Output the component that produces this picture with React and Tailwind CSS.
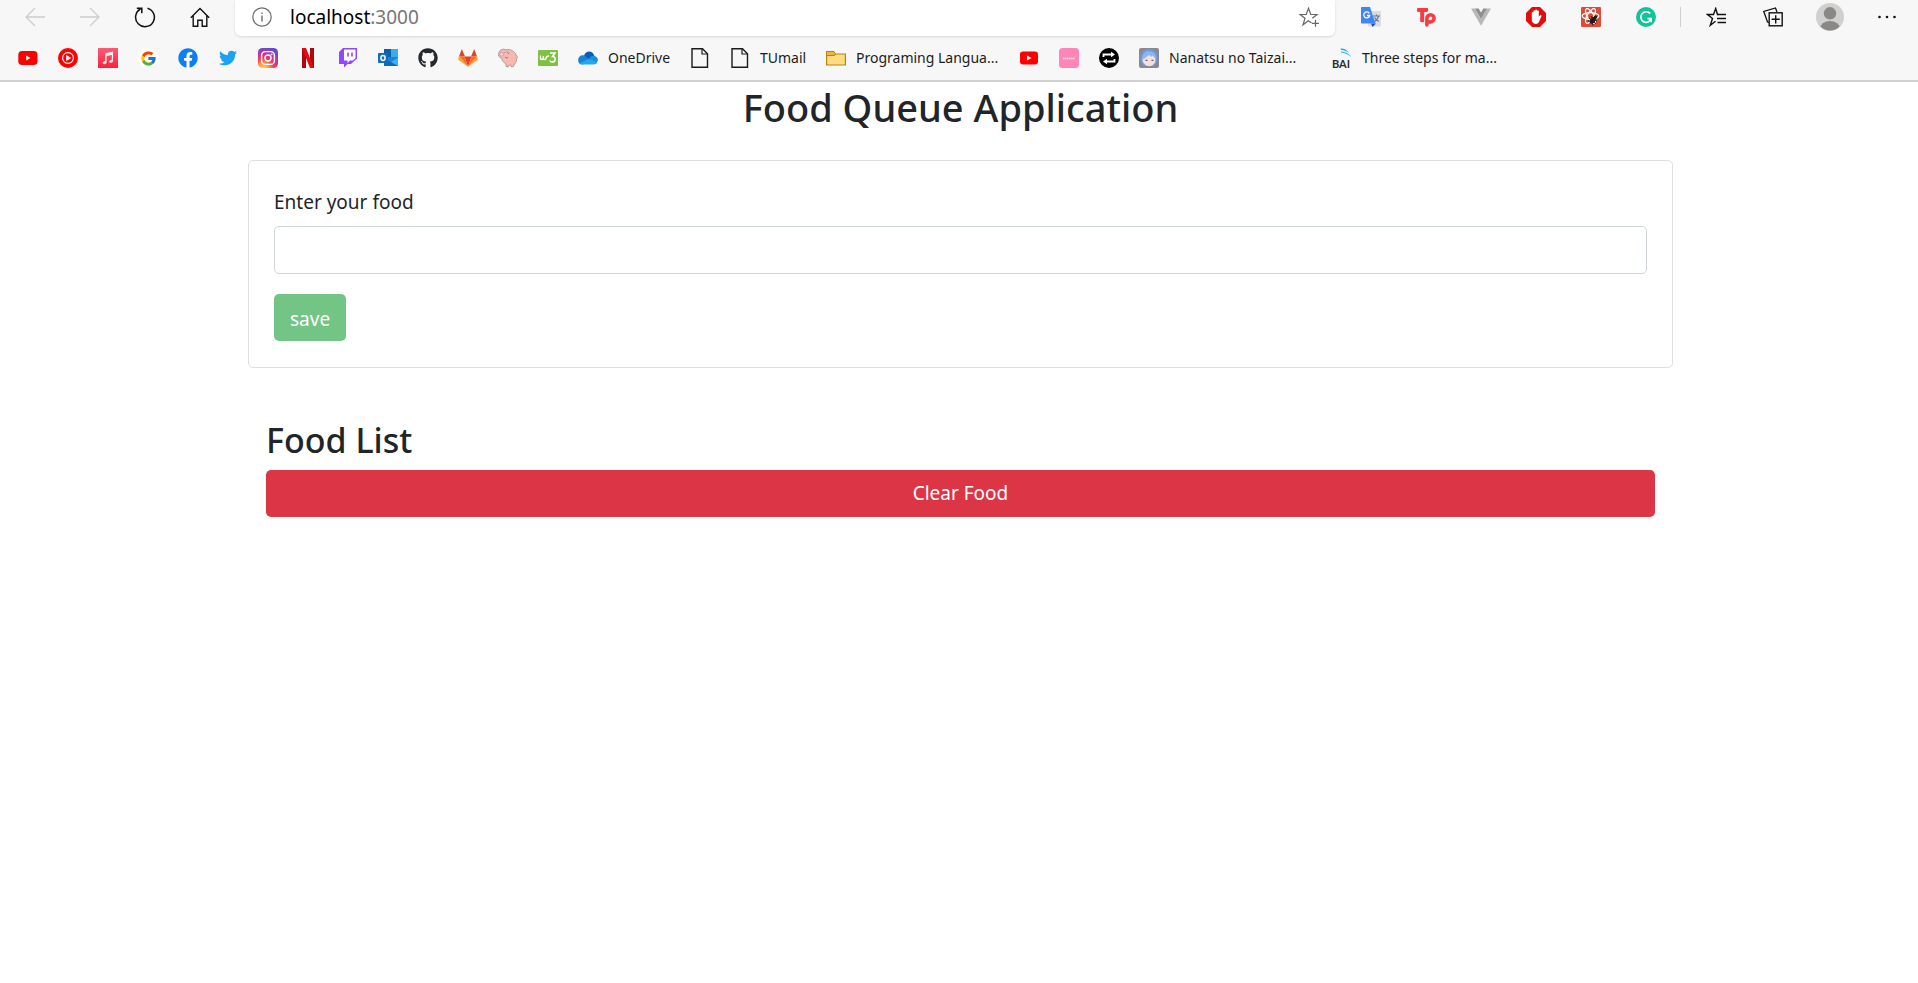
import React, { useState } from "react";
import { FaFacebook, FaTwitter, FaGithub } from "react-icons/fa";
import { FcGoogle } from "react-icons/fc";

function Svg({ size = 20, box = 20, children, className = "" }) {
  return (
    <svg width={size} height={size} viewBox={`0 0 ${box} ${box}`} fill="none" className={`shrink-0 ${className}`} aria-hidden="true">
      {children}
    </svg>
  );
}

const YoutubeIcon = () => (
  <Svg>
    <rect x="0.3" y="3" width="19.2" height="14" rx="3.8" fill="#ff0000" />
    <path d="M8.2 7.6v4.8l4.2-2.4z" fill="#fff" />
  </Svg>
);
const YoutubeMusicIcon = () => (
  <Svg>
    <circle cx="10" cy="10" r="10" fill="#ff0000" />
    <circle cx="10" cy="10" r="5.4" stroke="#fff" strokeWidth="1.1" />
    <path d="M8.2 7v6l5-3z" fill="#fff" />
  </Svg>
);
const AppleMusicIcon = () => (
  <Svg>
    <defs>
      <linearGradient id="music" x1="0" y1="0" x2="0" y2="1">
        <stop offset="0" stopColor="#fb5c74" />
        <stop offset="1" stopColor="#fa233b" />
      </linearGradient>
    </defs>
    <rect width="20" height="20" fill="url(#music)" />
    <path d="M7.2 5.3 15 3.6v8.9c0 1.4-.8 2.2-2.2 2.3-1.9.2-2.3-2-.6-2.6l1.6-.5V7l-5.2 1.1v5.7c0 1.5-.8 2.3-2.2 2.4-2 .1-2.3-2.1-.6-2.7l1.4-.4z" fill="#fff" fillOpacity=".92" />
  </Svg>
);
const GoogleIcon = () => (
  <span className="flex size-5 shrink-0 items-center justify-center rounded-full bg-white">
    <FcGoogle size={17} />
  </span>
);
const FacebookIcon = () => (
  <span className="flex size-5 shrink-0 items-center justify-center rounded-full bg-white">
    <FaFacebook size={20} color="#0c7ff2" />
  </span>
);
const TwitterIcon = () => <FaTwitter size={18} color="#1da1f2" />;
const InstagramIcon = () => (
  <Svg>
    <defs>
      <radialGradient id="insta" cx="0.27" cy="1.05" r="1.1">
        <stop offset="0" stopColor="#ffdc5e" />
        <stop offset="0.25" stopColor="#ff9d3c" />
        <stop offset="0.5" stopColor="#f2385b" />
        <stop offset="0.75" stopColor="#b932a8" />
        <stop offset="1" stopColor="#5a4fd0" />
      </radialGradient>
    </defs>
    <rect width="20" height="20" rx="4.5" fill="url(#insta)" />
    <rect x="3.6" y="3.6" width="12.8" height="12.8" rx="3.6" stroke="#fff" strokeWidth="1.4" />
    <circle cx="10" cy="10" r="3" stroke="#fff" strokeWidth="1.4" />
    <circle cx="13.7" cy="6.3" r="0.9" fill="#fff" />
  </Svg>
);
const NetflixIcon = () => (
  <Svg>
    <path d="M4 0h4v20H4zM12 0h4v20h-4z" fill="#b1060f" />
    <path d="M4 0h4l8 20h-4z" fill="#e50914" />
  </Svg>
);
const TwitchIcon = () => (
  <Svg>
    <path d="M1 4 5 0h14v10.5L13 16h-3.500L6 19.5V16H1z" fill="#9146ff" />
    <path d="M6 1.5h11.5V10L15 12.5h-3L9.500 15v-2.500H6z" fill="#fff" />
    <path d="M10 4.5v4M14 4.5v4" stroke="#9146ff" strokeWidth="1.6" />
  </Svg>
);
const OutlookIcon = () => (
  <Svg>
    <rect x="6" y="1" width="14" height="17" rx="1" fill="#1a85d4" />
    <rect x="6" y="1" width="7" height="8" fill="#0f5fa8" />
    <rect x="13" y="1" width="7" height="8" fill="#36aef0" />
    <path d="M6 9.5 13 14l7-4.5V18H6z" fill="#3ab3f3" />
    <path d="m6 10 14 8H6z" fill="#1269b5" />
    <rect y="5" width="10" height="10" rx="1" fill="#0f6cbd" />
    <ellipse cx="5" cy="10" rx="2.1" ry="2.4" stroke="#fff" strokeWidth="1.5" />
  </Svg>
);
const GithubIcon = () => <FaGithub size={20} color="#24292e" className="shrink-0" />;
const GitlabIcon = () => (
  <Svg>
    <path d="M3.8 1 7 8.5H1zM16.2 1 19 8.5h-6z" fill="#e24329" />
    <path d="M10 18.8 6.5 8.5h7z" fill="#e24329" />
    <path d="M1 8.5h5.6L10 18.8zM19 8.5h-5.6L10 18.8z" fill="#fc6d26" />
    <path d="M1 8.5 0 11.5l10 7.3zM19 8.5l1 3-10 7.3z" fill="#fca326" />
  </Svg>
);
const PigIcon = () => (
  <Svg>
    <path d="M2 2.5 5 1l3 .8C12 .5 17 3 18.5 8l1.2 1-1 1.200c.2 2.600-.7 4.500-2.200 5.800l-1 2.500-2.200.3-.4-1.600-2 .1-.8 1.700-2.200-.6.2-2.400C5.300 14.500 4 12.500 3.600 10 1 9.500-.2 7.500.4 5.500z" fill="#f5b9b4" stroke="#a58480" strokeWidth=".7" />
    <circle cx="3.6" cy="6.2" r="1.9" fill="#fad3cc" stroke="#b58984" strokeWidth=".6" />
    <path d="M6.5 4.5h.8M9 3.5l2 2.5M7 9c1 1 2 1 3 .5" stroke="#6d5553" strokeWidth=".7" />
  </Svg>
);
const W3Icon = () => (
  <Svg>
    <rect y="2" width="20" height="16" rx="1" fill="#7fc242" />
    <path d="M2.500 7.500v2.500c0 2 2.800 2 2.800 0V8v2c0 2 2.800 2 2.800 0 0-1.500.9-2 2.900-2" stroke="#fff" strokeWidth="1.400" />
    <path d="M12 5h5l-2.500 3.500c4 .2 3.300 5.500-.3 5.500-1.200 0-2-.6-2.400-1.500" stroke="#fff" strokeWidth="1.6" />
  </Svg>
);
const OneDriveIcon = () => (
  <Svg>
    <path d="M6 7.5C8 2.2 14.5 2 16.4 8L11 13z" fill="#0a5eb5" />
    <path d="M.2 12.5C0 9 3 6.8 6 7.5l9 6.5-11 2.500C1.800 16.5.3 15 .2 12.5z" fill="#1384d8" />
    <path d="M11 10.8c1-2.500 3.500-3.500 5.400-2.800 2 .3 3.600 2 3.600 4.200l-2 3z" fill="#1490df" />
    <path d="M1.5 15.300 11 10.800l8.300 4c-.8 1.200-2 1.700-3.300 1.700H4.200c-1 0-2-.5-2.700-1.200z" fill="#28a8ea" />
  </Svg>
);
const PageIcon = () => (
  <Svg>
    <path d="M2 .7h10.5l5 5V19.3H2z" stroke="#1b1b1b" strokeWidth="1.4" />
    <path d="M12 .7V6h5.5" stroke="#1b1b1b" strokeWidth="1.2" />
  </Svg>
);
const FolderIcon = () => (
  <Svg>
    <path d="M.6 17V3.5h7L9.4 6h10v11z" fill="#ffdb80" stroke="#b58514" strokeWidth="1.2" />
    <path d="M.6 7.5H8L9.6 6" fill="none" stroke="#b58514" strokeWidth="1.1" />
    <path d="M1.2 4.1h6L8.5 6l-.8.9H1.2z" fill="#ecb83a" />
  </Svg>
);
const SmallYoutubeIcon = () => (
  <Svg>
    <rect x="1" y="3.500" width="18" height="13" rx="3" fill="#ff0000" />
    <path d="M8 7.5v5l4.500-2.500z" fill="#fff" />
  </Svg>
);
const PinkIcon = () => (
  <Svg>
    <rect width="20" height="20" rx="3.5" fill="#ff85b8" />
    <path d="M4 10.5h12" stroke="#fff" strokeOpacity=".75" strokeWidth="1.3" strokeDasharray="1.5 .4" />
  </Svg>
);
const SwapIcon = () => (
  <Svg>
    <circle cx="10" cy="10" r="10" fill="#000" />
    <path d="M4.500 9V6.500h8.500M15.500 11v2.500H7" stroke="#fff" strokeWidth="1.800" />
    <path d="m12 3.800 4 2.700-4 2.700zM8 10.800l-4 2.700 4 2.700z" fill="#fff" />
  </Svg>
);
const AnimeIcon = () => (
  <Svg>
    <rect width="20" height="20" rx="2" fill="#8c8791" />
    <path d="M2 15C0 6 4 1 10 1s9.5 4 8 13l-3 4H5z" fill="#6d9be0" />
    <path d="M3.500 11.500C4 7 7 5.500 10.500 5.500c4 0 6 2.500 6 6.500 0 3.500-3.200 6.200-6.300 6.200S3.500 15.500 3.500 11.500z" fill="#f8dfd8" />
    <path d="M3 11.500C3 5 7 2.500 12 3.500c4 1 5 4 5 7.500l-3.500-3.500-.5 1.500-3-2L5.500 10.500z" fill="#8db6f0" />
    <path d="M6.500 12.300h2M12.500 12.300h2" stroke="#4364a8" strokeWidth="1.300" />
  </Svg>
);
const BaiIcon = () => (
  <Svg className="overflow-visible">
    <path d="M8.500 .5C13 .5 15.500 2.500 17 5c-2-1.800-5-2.800-8-3zM9 3.500c4 .4 8 2 10.500 5.500C16.500 6.800 13 5 9 4.500z" fill="#29abe2" />
    <text x="0" y="19.500" fontSize="11" fontWeight="700" fontFamily="Lato, sans-serif" fill="#2b2b2b">BAI</text>
  </Svg>
);

const TranslateIcon = () => (
  <Svg>
    <rect x="7" y="4" width="13" height="15.5" rx="1" fill="#dadce0" />
    <path d="M12 9h7M15.500 7.500V9M17.500 9c-.5 2.500-2 4.500-4 5.500M13.800 10.500c.7 1.800 2 3 4 4" stroke="#5f7a94" strokeWidth="1.2" />
    <path d="M10 16.500h5L11.500 20z" fill="#3446b8" />
    <path d="M1 0h8l5.500 16.500H1c-.6 0-1-.4-1-1V1c0-.6.4-1 1-1z" fill="#4285f4" />
    <path d="M8.300 6.300A3 3 0 1 0 8.700 8.500H6" stroke="#fff" strokeWidth="1.3" />
  </Svg>
);
const TpIcon = () => (
  <Svg>
    <path d="M1 2.200c0-.7.500-1.200 1.200-1.200H11c.7 0 1.200.5 1.200 1.200v1.600c0 .7-.5 1.200-1.200 1.200H8.200v9c0 .7-.5 1.200-1.200 1.200H5.400c-.7 0-1.200-.5-1.200-1.200V5h-2C1.500 5 1 4.500 1 3.800z" fill="#f43e42" />
    <path d="M10.900 18V11.300a3.600 3.600 0 1 1 3.600 3.600" stroke="#f43e42" strokeWidth="3.600" strokeLinecap="round" />
    <path d="M11 14.900h4" stroke="#f43e42" strokeWidth="3.400" />
  </Svg>
);
const VueIcon = () => (
  <Svg>
    <path d="M0 1.5h4L10 12l6-10.500h4L10 18.800z" fill="#b8b8b8" />
    <path d="M4 1.5h3.700L10 5.500l2.300-4H16L10 12z" fill="#8f8f8f" />
  </Svg>
);
const AdblockIcon = () => (
  <Svg>
    <path d="M6 0h8l6 6v8l-6 6H6l-6-6V6z" fill="#e40d0d" />
    <path d="M5.800 11V5.800c0-1.100 1.600-1.100 1.600 0V4.200c0-1.200 1.800-1.200 1.800 0v-.9c0-1.200 1.800-1.200 1.800 0v.9c0-1.200 1.800-1.200 1.800 0v5.600l1-1.200c.9-.9 2.200-.2 1.600.8L13 14.800c-.6 1.300-1.600 2.100-3.200 2.100-2.600 0-4-1.600-4-3.800z" fill="#fff" />
  </Svg>
);
const ReactBugIcon = () => (
  <Svg>
    <rect width="20" height="20" rx="1" fill="#dd4b39" />
    <g stroke="#fff" strokeWidth="1.2">
      <ellipse cx="9.5" cy="9" rx="8.3" ry="3.3" />
      <ellipse cx="9.5" cy="9" rx="8.3" ry="3.3" transform="rotate(60 9.5 9)" />
      <ellipse cx="9.5" cy="9" rx="8.3" ry="3.3" transform="rotate(120 9.5 9)" />
    </g>
    <g transform="rotate(40 12 13)" stroke="#1c1c1c">
      <ellipse cx="12" cy="13.5" rx="1.900" ry="3.200" fill="#1c1c1c" />
      <circle cx="12" cy="9.300" r="1.200" fill="#1c1c1c" />
      <path d="M8 11.500h8M7.500 14h9M8.500 17l2.500-1.500M15.500 17L13 15.500" />
    </g>
  </Svg>
);
const GrammarlyIcon = () => (
  <Svg>
    <circle cx="10" cy="10" r="10" fill="#15c39a" />
    <path d="M14.2 6.6a5.300 5.300 0 1 0 1 5H11.500M15.200 11.200v4" stroke="#fff" strokeWidth="1.6" />
  </Svg>
);

const BackIcon = () => (
  <Svg>
    <path d="M20 10H1M10 1 1 10l9 9" stroke="#cdcdcd" strokeWidth="1.3" />
  </Svg>
);
const ForwardIcon = () => (
  <Svg>
    <path d="M0 10h19M10 1l9 9-9 9" stroke="#cdcdcd" strokeWidth="1.3" />
  </Svg>
);
const ReloadIcon = () => (
  <Svg size={22} box={22}>
    <path d="M13.500 2.200A9.400 9.400 0 1 1 6.500 3" stroke="#111" strokeWidth="1.5" />
    <path d="M2.800 2.300H7.800V7.200" stroke="#111" strokeWidth="1.5" />
  </Svg>
);
const HomeIcon = () => (
  <Svg>
    <path d="m.8 10.800 9.200-9.300 9.200 9.300M3.200 8.600v10.600h4.600v-6h4.400v6h4.600V8.600" stroke="#111" strokeWidth="1.4" />
  </Svg>
);
const InfoIcon = () => (
  <Svg>
    <circle cx="10" cy="10" r="9.2" stroke="#6b6b6b" strokeWidth="1.2" />
    <path d="M10 8.5v6M10 5.4v1.5" stroke="#6b6b6b" strokeWidth="1.4" />
  </Svg>
);
const StarAddIcon = () => (
  <Svg>
    <path d="m12.500 16-3.200-2.200L4 17.800l2-6.500L1 7.500h6.200l2.300-6.200 2.300 6.200H18l-4.700 3.800" stroke="#666" strokeWidth="1.2" />
    <path d="M16.500 12.800v7M13 16.300h7" stroke="#666" strokeWidth="1.2" />
  </Svg>
);
const FavoritesIcon = () => (
  <Svg>
    <path d="M12.500 7.500h-1L9.700 1.500 7.500 7.500H1.500l5 4-2.200 6.800 5.200-4" stroke="#111" strokeWidth="1.4" />
    <path d="M11.500 7.500H20M11 11.500h9M11.500 15.500H20" stroke="#111" strokeWidth="1.4" />
  </Svg>
);
const CollectionsIcon = () => (
  <Svg>
    <path d="M6 15.500 4.500 15 .8 4.500 12.500 1l1.500 4" stroke="#111" strokeWidth="1.3" />
    <rect x="6.2" y="5.8" width="13" height="13" stroke="#111" strokeWidth="1.4" />
    <path d="M12.700 8.200v8.200M8.600 12.300h8.200" stroke="#111" strokeWidth="1.4" />
  </Svg>
);
const ProfileIcon = () => (
  <Svg size={28} box={28}>
    <defs>
      <clipPath id="profile">
        <circle cx="14" cy="14" r="13.5" />
      </clipPath>
    </defs>
    <circle cx="14" cy="14" r="14" fill="#d2d0ce" />
    <circle cx="14" cy="10.3" r="6.2" fill="#8a8886" />
    <ellipse cx="14" cy="25.5" rx="10" ry="7.5" fill="#8a8886" clipPath="url(#profile)" />
  </Svg>
);
const MoreIcon = () => (
  <Svg>
    <g fill="#111">
      <circle cx="2.5" cy="10" r="1.3" />
      <circle cx="10" cy="10" r="1.3" />
      <circle cx="17.5" cy="10" r="1.3" />
    </g>
  </Svg>
);

function ToolButton({ label, children }) {
  return (
    <button type="button" aria-label={label} className="flex h-8 w-[55px] shrink-0 items-center justify-center">
      {children}
    </button>
  );
}

const BOOKMARKS = [
  { name: "YouTube", Icon: YoutubeIcon },
  { name: "YouTube Music", Icon: YoutubeMusicIcon },
  { name: "Music", Icon: AppleMusicIcon },
  { name: "Google", Icon: GoogleIcon },
  { name: "Facebook", Icon: FacebookIcon },
  { name: "Twitter", Icon: TwitterIcon },
  { name: "Instagram", Icon: InstagramIcon },
  { name: "Netflix", Icon: NetflixIcon },
  { name: "Twitch", Icon: TwitchIcon },
  { name: "Outlook", Icon: OutlookIcon },
  { name: "GitHub", Icon: GithubIcon },
  { name: "GitLab", Icon: GitlabIcon },
  { name: "Pig", Icon: PigIcon },
  { name: "W3Schools", Icon: W3Icon },
  { name: "OneDrive", Icon: OneDriveIcon, text: "OneDrive", width: "w-[62px]" },
  { name: "Page", Icon: PageIcon },
  { name: "TUmail", Icon: PageIcon, text: "TUmail", width: "w-[46px]" },
  { name: "Programing", Icon: FolderIcon, text: "Programing Langua...", width: "w-[143px]" },
  { name: "Videos", Icon: SmallYoutubeIcon },
  { name: "Pink", Icon: PinkIcon },
  { name: "Convert", Icon: SwapIcon },
  { name: "Nanatsu", Icon: AnimeIcon, text: "Nanatsu no Taizai...", width: "w-[143px]" },
  { name: "BAI", Icon: BaiIcon, text: "Three steps for ma...", width: "w-[143px]" },
];

function BrowserBar() {
  return (
    <header className="overflow-hidden border-b-2 border-[#d0d0d0] bg-[#f7f7f7]">
      <div className="flex h-9 items-center">
        <nav className="flex pb-0.5 pl-[7px]" aria-label="Navigation">
          <ToolButton label="Back"><BackIcon /></ToolButton>
          <ToolButton label="Forward"><ForwardIcon /></ToolButton>
          <ToolButton label="Reload"><ReloadIcon /></ToolButton>
          <ToolButton label="Home"><HomeIcon /></ToolButton>
        </nav>
        <div className="ml-2 flex h-9 flex-1 items-center rounded-b-md bg-white pr-4 pb-0.5 pl-[17px] shadow-sm">
          <InfoIcon />
          <p className="ml-[18px] flex-1 text-[19px] text-black">
            localhost<span className="text-[#767676]">:3000</span>
          </p>
          <button type="button" aria-label="Add to favorites"><StarAddIcon /></button>
        </div>
        <div className="flex items-center pr-1 pb-0.5 pl-2">
          <ToolButton label="Translate"><TranslateIcon /></ToolButton>
          <ToolButton label="Tp"><TpIcon /></ToolButton>
          <ToolButton label="Vue"><VueIcon /></ToolButton>
          <ToolButton label="Adblock"><AdblockIcon /></ToolButton>
          <ToolButton label="React"><ReactBugIcon /></ToolButton>
          <ToolButton label="Grammarly"><GrammarlyIcon /></ToolButton>
          <span className="mx-[7px] h-5 w-px bg-[#cfcfcf]" />
          <span className="flex items-center gap-0.5">
            <ToolButton label="Favorites"><FavoritesIcon /></ToolButton>
            <ToolButton label="Collections"><CollectionsIcon /></ToolButton>
            <ToolButton label="Profile"><ProfileIcon /></ToolButton>
            <ToolButton label="More"><MoreIcon /></ToolButton>
          </span>
        </div>
      </div>
      <nav className="flex h-11 items-center gap-5 pl-[18px]" aria-label="Bookmarks">
        {BOOKMARKS.map(({ name, Icon, text, width }) => (
          <a key={name} href="#" aria-label={text || name} className="flex shrink-0 items-center gap-2.5 text-sm text-[#1b1b1b]">
            <span className="flex w-5 justify-center"><Icon /></span>
            {text && <span className={`whitespace-nowrap ${width}`}>{text}</span>}
          </a>
        ))}
      </nav>
    </header>
  );
}

export default function App() {
  const [food, setFood] = useState("");
  return (
    <div className="min-h-screen bg-white font-['Noto_Sans','Open_Sans',sans-serif] text-[#212529]">
      <BrowserBar />
      <div className="pl-[3px]">
        <main className="mx-auto max-w-[1425px] pb-10">
          <h1 className="pt-1 text-center text-[38px] leading-[42px] font-medium">Food Queue Application</h1>
          <form className="mt-8 rounded-[5px] border border-[#dfdfdf] px-[25px] pt-[25px] pb-[26px]" onSubmit={(e) => e.preventDefault()}>
            <label htmlFor="food" className="block text-[19px] leading-8">Enter your food</label>
            <input
              id="food"
              type="text"
              value={food}
              onChange={(e) => setFood(e.target.value)}
              className="mt-2 block h-12 w-full rounded-[5px] border border-[#ced4da] px-4 text-[19px]"
            />
            <button type="submit" disabled={!food} className="mt-5 block h-[47px] rounded-[5px] bg-[#28a745] px-4 pt-1 text-[19px] text-white disabled:opacity-65">
              save
            </button>
          </form>
          <section className="px-[18px] pt-12">
            <h2 className="text-[34px] leading-[48px] font-medium">Food List</h2>
            <button type="button" className="mt-1.5 h-[47px] w-full rounded-[5px] bg-[#dc3545] text-[19px] text-white">
              Clear Food
            </button>
          </section>
        </main>
      </div>
    </div>
  );
}
